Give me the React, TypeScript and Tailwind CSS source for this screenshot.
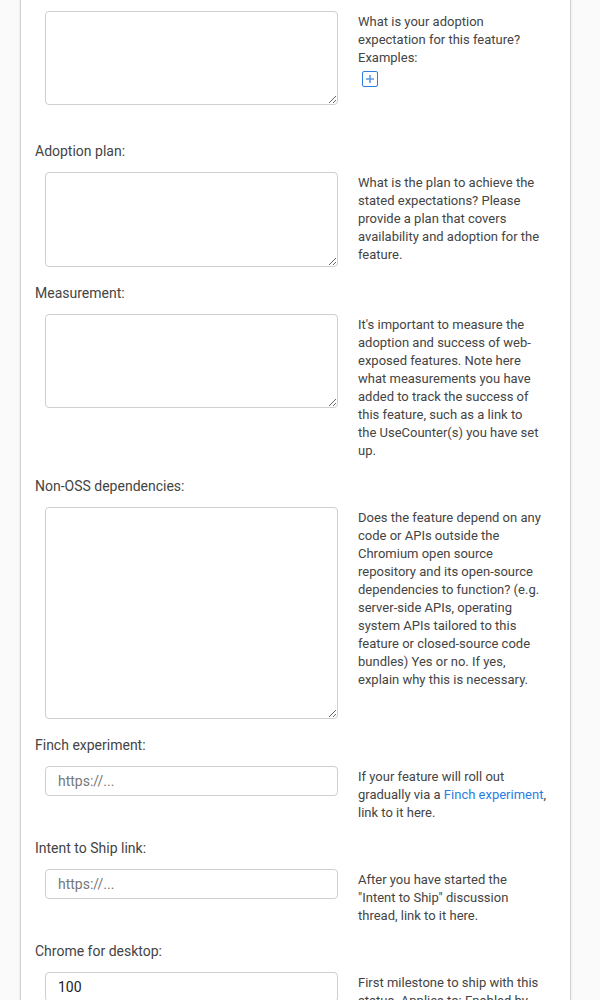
import React from "react";

const FONT = { fontFamily: 'Roboto, "Liberation Sans", Arial, sans-serif' };

type Field = {
  label?: string;
  kind: "textarea" | "input";
  height?: number;
  placeholder?: string;
  value?: string;
  help: React.ReactNode[];
  extra?: React.ReactNode;
  extraBottom?: boolean;
};

function PlusButton() {
  return (
    <div className="mt-[4px] ml-[4px] w-4 h-4 border border-[#2f7de1] rounded-[2px] flex items-center justify-center">
      <svg width="10" height="10" viewBox="0 0 10 10">
        <path d="M5 1v8M1 5h8" stroke="#5a9be6" strokeWidth="1.6" />
      </svg>
    </div>
  );
}

// help lines are broken by hand so they wrap like the original page
const fields: Field[] = [
  {
    kind: "textarea",
    height: 94,
    extraBottom: true,
    help: ["What is your adoption", "expectation for this feature?", "Examples:"],
    extra: <PlusButton />,
  },
  {
    label: "Adoption plan:",
    kind: "textarea",
    height: 95,
    help: [
      "What is the plan to achieve the",
      "stated expectations? Please",
      "provide a plan that covers",
      "availability and adoption for the",
      "feature.",
    ],
  },
  {
    label: "Measurement:",
    kind: "textarea",
    height: 94,
    help: [
      "It's important to measure the",
      "adoption and success of web-",
      "exposed features. Note here",
      "what measurements you have",
      "added to track the success of",
      "this feature, such as a link to",
      "the UseCounter(s) you have set",
      "up.",
    ],
  },
  {
    label: "Non-OSS dependencies:",
    kind: "textarea",
    height: 212,
    help: [
      "Does the feature depend on any",
      "code or APIs outside the",
      "Chromium open source",
      "repository and its open-source",
      "dependencies to function? (e.g.",
      "server-side APIs, operating",
      "system APIs tailored to this",
      "feature or closed-source code",
      "bundles) Yes or no. If yes,",
      "explain why this is necessary.",
    ],
  },
  {
    label: "Finch experiment:",
    kind: "input",
    placeholder: "https://...",
    help: [
      "If your feature will roll out",
      <>
        gradually via a{" "}
        <a className="text-[#2b7de0]" href="#">
          Finch experiment
        </a>
        ,
      </>,
      "link to it here.",
    ],
  },
  {
    label: "Intent to Ship link:",
    kind: "input",
    placeholder: "https://...",
    help: ["After you have started the", '"Intent to Ship" discussion', "thread, link to it here."],
  },
  {
    label: "Chrome for desktop:",
    kind: "input",
    value: "100",
    help: [
      "First milestone to ship with this",
      "status. Applies to: Enabled by",
      "default, Browser Intervention,",
      "and Deprecated.",
    ],
  },
];

export default function App() {
  return (
    <div className="min-h-[1000px] bg-[#fafafa] overflow-hidden" style={FONT}>
      <div className="ml-[20px] w-[551px] min-h-[1000px] bg-white border-x border-[#d0d0d0] shadow-[0_0_3px_rgba(0,0,0,0.08)] pl-[14px] pt-[11px]">
        {fields.map((f, i) => (
          <div key={i} className={f.extraBottom ? "mb-[36px]" : "mb-[16px]"}>
            {f.label && (
              <div className="h-[20px] leading-[20px] text-[14px] text-[#444] mb-[11px]">{f.label}</div>
            )}
            <div className="flex items-start">
              <div className="ml-[10px] w-[293px] shrink-0">
                {f.kind === "textarea" ? (
                  <textarea
                    className="block w-full border border-[#cfcfcf] rounded-[4px] bg-white outline-none"
                    style={{ height: f.height }}
                  />
                ) : (
                  <input
                    className="block w-full h-[30px] border border-[#cfcfcf] rounded-[4px] bg-white px-[12px] text-[14px] text-[#222] placeholder:text-[#777] outline-none"
                    placeholder={f.placeholder}
                    defaultValue={f.value}
                    style={FONT}
                  />
                )}
              </div>
              <div className="ml-[20px] w-[192px] pt-[2px] text-[13px] leading-[18px] text-[#444]">
                {f.help.map((line, j) => (
                  <div key={j} className="whitespace-nowrap">
                    {line}
                  </div>
                ))}
                {f.extra}
              </div>
            </div>
          </div>
        ))}
      </div>
    </div>
  );
}
